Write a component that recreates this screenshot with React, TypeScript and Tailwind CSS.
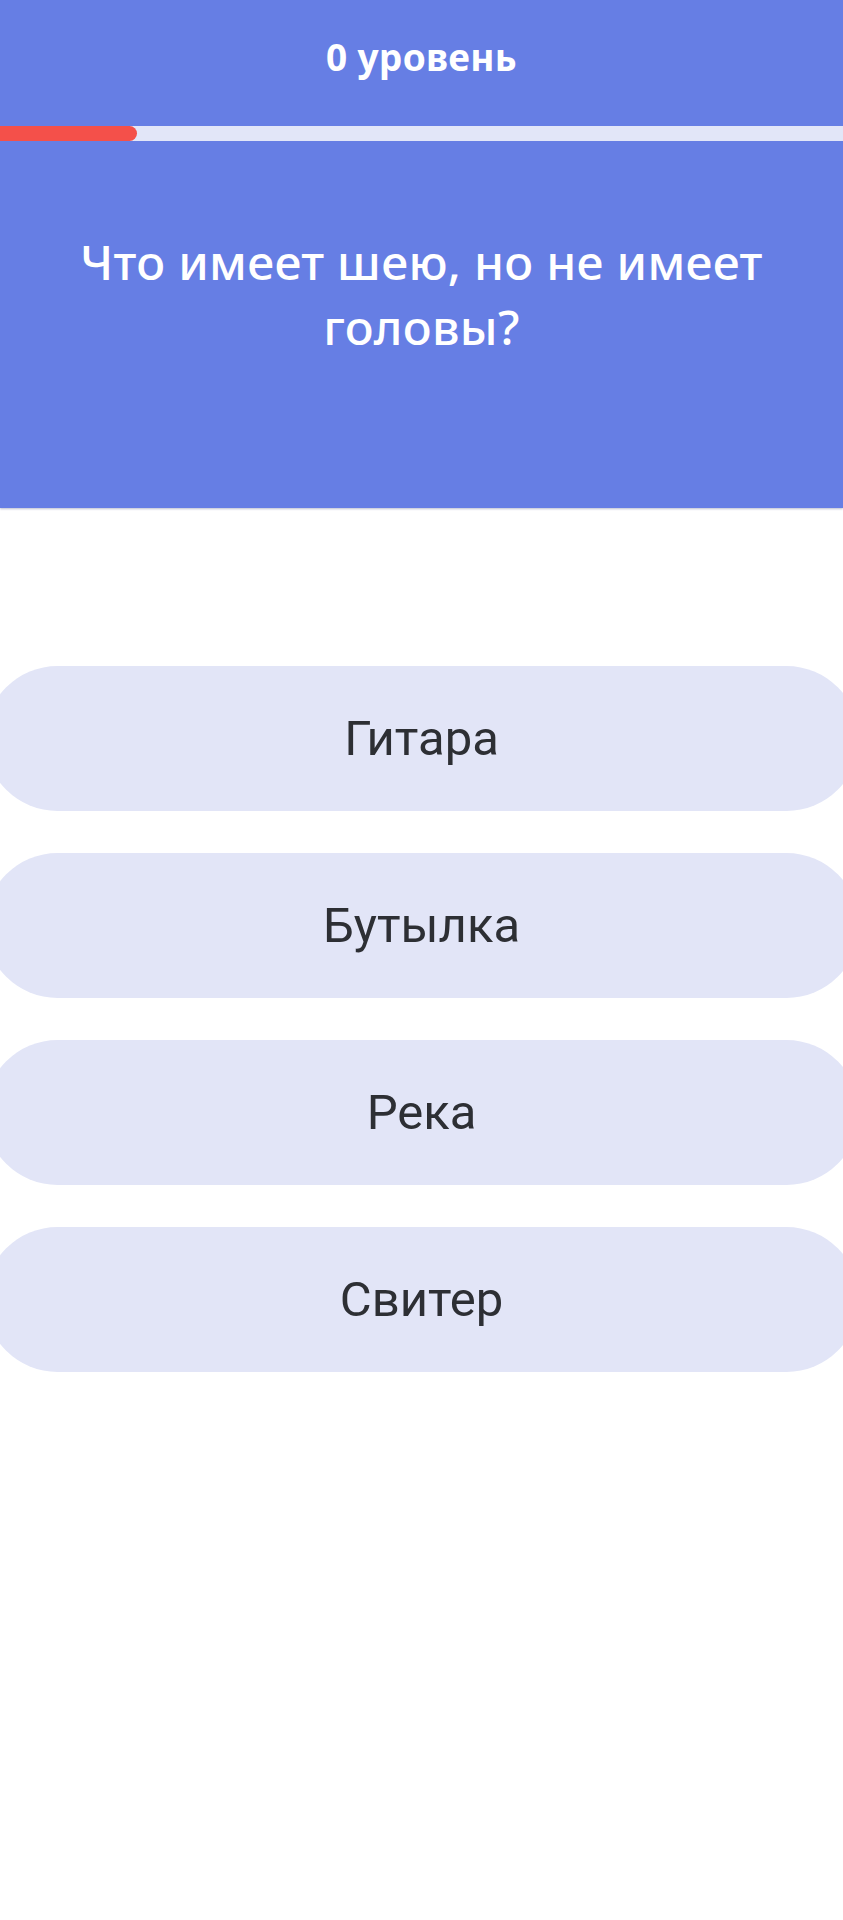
import React from "react";

const answers = ["Гитара", "Бутылка", "Река", "Свитер"];

export default function App() {
  const progress = 137;
  return (
    <div className="min-h-[1920px] w-full overflow-x-hidden bg-white">
      <header className="h-[508px] bg-[#667ee4] shadow-[0_1px_2px_rgba(60,70,120,0.35)] flex flex-col">
        <h1
          className="pt-[35px] text-center text-[37px] leading-[44px] font-bold tracking-[0.3px] text-white"
          style={{ fontFamily: "'Noto Sans', 'Open Sans', sans-serif" }}
        >
          0 уровень
        </h1>
        <div className="mt-[47px] h-[15px] w-full bg-[#e2e6f8]">
          <div
            className="h-full rounded-r-full bg-[#f4504a]"
            style={{ width: progress }}
          />
        </div>
        <p
          className="mt-[88px] px-[40px] text-center text-[48px] leading-[65px] font-medium tracking-[0.3px] text-white"
          style={{ fontFamily: "'Noto Sans', 'Open Sans', sans-serif" }}
        >
          Что имеет шею, но не имеет головы?
        </p>
      </header>

      <main className="mt-[158px] flex flex-col items-center gap-[42px]">
        {answers.map((a) => (
          <button
            key={a}
            className="h-[145px] w-[874px] shrink-0 rounded-full bg-[#e2e5f7] text-[49px] text-[#2d2f34]"
            style={{ fontFamily: "Roboto, 'Noto Sans', sans-serif" }}
          >
            {a}
          </button>
        ))}
      </main>
    </div>
  );
}
